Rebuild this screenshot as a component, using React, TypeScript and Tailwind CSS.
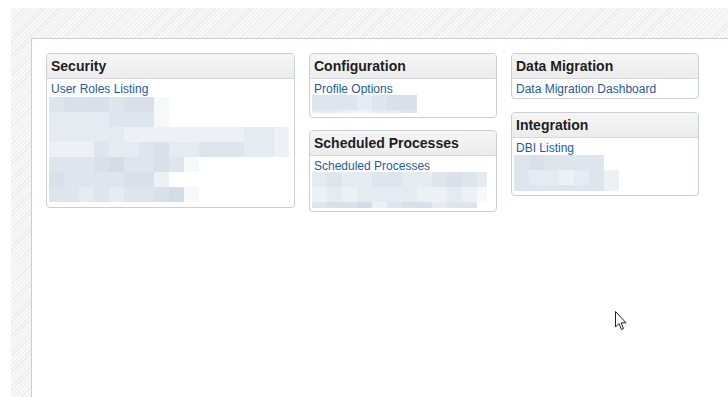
import React from 'react';

// pixelated (blurred-out) rows
const shades = [
    'bg-[#d3dce7]',
    'bg-[#d9e0ea]',
    'bg-[#dfe5ed]',
    'bg-[#e6ebf1]',
    'bg-[#edf0f5]',
    'bg-[#f6f8fa]',
];

type BlurRow = { h: string; cells: string };

function Blur({ rows, className = '' }: { rows: BlurRow[]; className?: string }) {
    return (
        <div className={`flex flex-col overflow-hidden ${className}`}>
            {rows.map((r, i) => (
                <div key={i} className={`flex overflow-hidden ${r.h}`}>
                    {r.cells.split('').map((c, j) => (
                        <div key={j} className={`w-[15px] shrink-0 ${shades[Number(c)]}`} />
                    ))}
                </div>
            ))}
        </div>
    );
}

function Card({
    title,
    link,
    rows,
    blurClass,
    pb = 'pb-[5px]',
}: {
    title: string;
    link: string;
    rows?: BlurRow[];
    blurClass?: string;
    pb?: string;
}) {
    return (
        <div className="border border-[#c9ced8] rounded-[4px] bg-white overflow-hidden">
            <div className="h-[25px] bg-gradient-to-b from-[#f5f5f5] to-[#ececec] border-b border-[#d5d9df] px-[4px] flex items-center">
                <span className="text-[14px] font-bold text-[#1e1e1e] leading-none">{title}</span>
            </div>
            <div className={`px-[2px] pt-[2px] ${pb}`}>
                <div className="text-[12px] leading-[16px] text-[#1d5aa0] pl-[2px]">{link}</div>
                {rows && <Blur rows={rows} className={blurClass} />}
            </div>
        </div>
    );
}

const securityRows: BlurRow[] = [
    { h: 'h-[15px]', cells: '21112115' },
    { h: 'h-[15px]', cells: '33332225' },
    { h: 'h-[15px]', cells: '3333344444444334' },
    { h: 'h-[15px]', cells: '4442332133222334' },
    { h: 'h-[15px]', cells: '2221022125' },
    { h: 'h-[15px]', cells: '12222114' },
    { h: 'h-[15px]', cells: '2232322105' },
];

const configRows: BlurRow[] = [
    { h: 'h-[15px]', cells: '2223211' },
    { h: 'h-[3px]', cells: '3344332' },
];

const schedRows: BlurRow[] = [
    { h: 'h-[15px]', cells: '323322332123' },
    { h: 'h-[15px]', cells: '434333344345' },
    { h: 'h-[6px]', cells: '21104211322' },
];

const integrationRows: BlurRow[] = [
    { h: 'h-[15px]', cells: '212222' },
    { h: 'h-[15px]', cells: '2334324' },
    { h: 'h-[6px]', cells: '2222224' },
];

export default function App() {
    return (
        <div className="w-[728px] h-[397px] bg-white pl-[11px] pt-[8px] overflow-hidden relative font-['Liberation_Sans',Arial,sans-serif]">
            <div className="h-[389px] bg-[repeating-linear-gradient(135deg,#ebebeb_0px,#ebebeb_1px,#f8f8f8_1px,#f8f8f8_3px)] pl-[20px] pt-[30px]">
                <div className="h-[359px] bg-white border-l border-t border-[#c6d0dd] pl-[14px] pt-[14px]">
                    <div className="flex items-start gap-[14px]">
                        <div className="w-[249px]">
                            <Card title="Security" link="User Roles Listing" rows={securityRows} />
                        </div>
                        <div className="w-[188px] flex flex-col gap-[12px]">
                            <Card
                                title="Configuration"
                                link="Profile Options"
                                rows={configRows}
                                blurClass="-mt-[2px]"
                                pb="pb-[4px]"
                            />
                            <Card
                                title="Scheduled Processes"
                                link="Scheduled Processes"
                                rows={schedRows}
                                blurClass="-mt-[2px] w-[175px]"
                                pb="pb-[3px]"
                            />
                        </div>
                        <div className="w-[188px] flex flex-col gap-[13px]">
                            <Card title="Data Migration" link="Data Migration Dashboard" pb="pb-[1px]" />
                            <Card
                                title="Integration"
                                link="DBI Listing"
                                rows={integrationRows}
                                blurClass="-mt-[1px]"
                                pb="pb-[4px]"
                            />
                        </div>
                    </div>
                </div>
            </div>

            {/* mouse pointer */}
            <svg className="absolute left-[615px] top-[311px]" width="13" height="20" viewBox="0 0 13 20">
                <path d="M0.5 0.5 L0.5 16 L4 12.5 L6.5 18.5 L8.5 17.6 L6.2 11.8 L11 11.8 Z" fill="#fff" stroke="#222" strokeWidth="1" strokeLinejoin="miter" />
            </svg>
        </div>
    );
}
